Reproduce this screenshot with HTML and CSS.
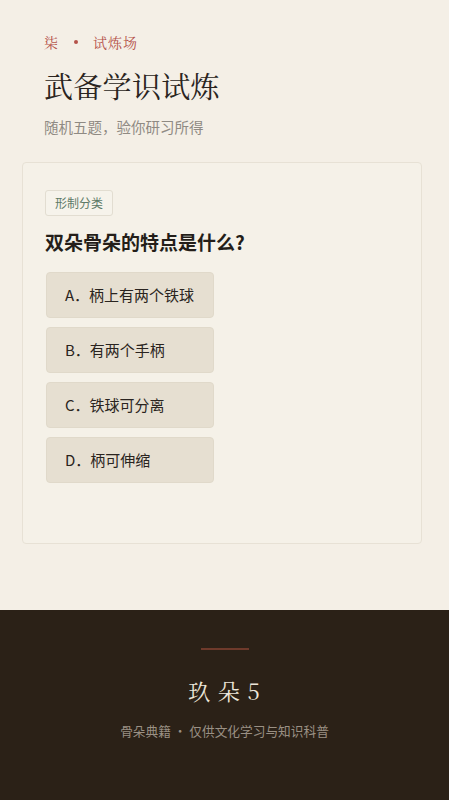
FILE: index.html
```html
<!DOCTYPE html>
<html lang="zh-CN">
<head>
<meta charset="utf-8">
<title>武备学识试炼</title>
<link rel="stylesheet" href="styles.css">
</head>
<body>
<main class="page">
  <header class="intro">
    <div class="eyebrow"><span>柒</span><span class="dot"></span><span>试炼场</span></div>
    <h1 class="title">武备学识试炼</h1>
    <p class="subtitle">随机五题，验你研习所得</p>
  </header>
  <section class="card">
    <span class="tag">形制分类</span>
    <h2 class="question">双朵骨朵的特点是什么?</h2>
    <div class="options">
      <button class="option">A．柄上有两个铁球</button>
      <button class="option">B．有两个手柄</button>
      <button class="option">C．铁球可分离</button>
      <button class="option">D．柄可伸缩</button>
    </div>
  </section>
</main>
<footer class="footer">
  <div class="rule"></div>
  <div class="brand">玖 朵 5</div>
  <div class="note">骨朵典籍 · 仅供文化学习与知识科普</div>
</footer>
</body>
</html>
```
FILE: styles.css
```css
* { box-sizing: border-box; }
html, body { margin: 0; padding: 0; }
body {
  background: #f4efe6;
  font-family: "Noto Sans CJK SC", "Noto Sans", sans-serif;
  color: #2a2420;
  min-height: 100vh;
  display: flex;
  flex-direction: column;
}
.page {
  padding: 32px 27px 66px 22px;
}
.intro {
  padding-left: 22px;
}
.eyebrow {
  display: flex;
  align-items: center;
  font-family: "Noto Serif CJK SC", "Liberation Serif", "Noto Sans CJK SC", serif;
  font-size: 14px;
  line-height: 20px;
  color: #b4524a;
  letter-spacing: 1px;
}
.dot {
  width: 4px;
  height: 4px;
  border-radius: 50%;
  background: #b4524a;
  margin: 0 15px 0 15px;
}
.title {
  margin: 14px 0 0 0;
  font-family: "Noto Serif CJK SC", "Liberation Serif", "Noto Sans CJK SC", serif;
  font-weight: 400;
  font-size: 29px;
  line-height: 40px;
  color: #2a2420;
  letter-spacing: 0.3px;
}
.subtitle {
  margin: 11px 0 0 0;
  font-size: 14.5px;
  line-height: 20px;
  color: #8f8a83;
}
.card {
  margin-top: 25px;
  border: 1px solid #e7e1d5;
  border-radius: 4px;
  background: #f5f1e8;
  padding: 27px 22px 60px 22px;
  display: flex;
  flex-direction: column;
  align-items: flex-start;
}
.tag {
  display: inline-block;
  font-size: 12px;
  line-height: 16px;
  padding: 4px 9px;
  border: 1px solid #e2ddd1;
  border-radius: 3px;
  color: #5d7a67;
  background: #f6f3eb;
}
.question {
  margin: 13px 0 0 0;
  font-size: 19px;
  line-height: 26px;
  font-weight: 700;
  color: #241e19;
}
.options {
  margin-top: 17px;
  display: inline-flex;
  flex-direction: column;
  gap: 9px;
  margin-left: 1px;
}
.option {
  font-family: inherit;
  font-size: 15px;
  line-height: 20px;
  text-align: left;
  color: #2a2420;
  background: #e6dfd1;
  border: 1px solid #e0d9ca;
  border-radius: 4px;
  padding: 12px 19px 12px 18px;
  height: 46px;
}
.footer {
  flex: 1 0 auto;
  background: #2b2117;
  min-height: 190px;
  padding-top: 38px;
  display: flex;
  flex-direction: column;
  align-items: center;
}
.rule {
  width: 48px;
  height: 2px;
  background: #6e3a2b;
}
.brand {
  margin-top: 26px;
  font-family: "Noto Serif CJK SC", "Liberation Serif", "Noto Sans CJK SC", serif;
  font-size: 22px;
  line-height: 30px;
  color: #ede6da;
  letter-spacing: 1px;
}
.note {
  margin-top: 16px;
  font-size: 12.7px;
  line-height: 18px;
  color: #9a9084;
}
```
